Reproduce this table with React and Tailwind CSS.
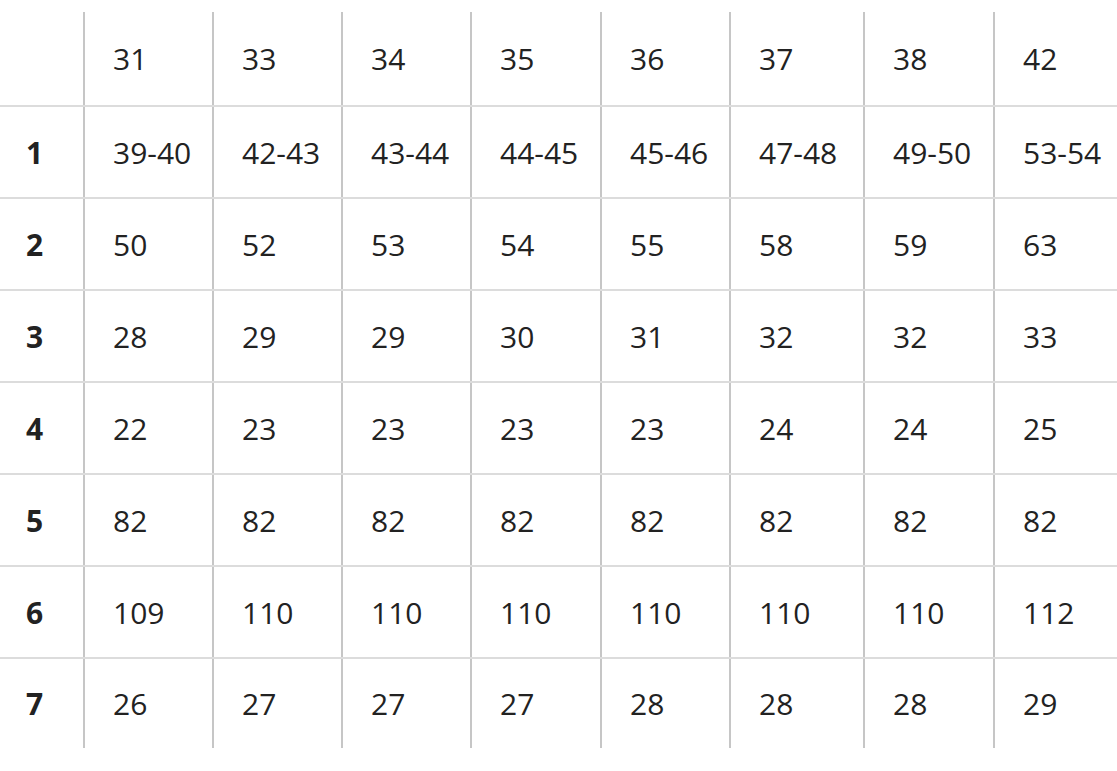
import React from 'react'

const widths = ['w-[83px]', 'w-[129px]', 'w-[129px]', 'w-[129px]', 'w-[130px]', 'w-[129px]', 'w-[134px]', 'w-[130px]', 'w-[124px]']

const head = ['31', '33', '34', '35', '36', '37', '38', '42']

const rows = [
    ['1', '39-40', '42-43', '43-44', '44-45', '45-46', '47-48', '49-50', '53-54'],
    ['2', '50', '52', '53', '54', '55', '58', '59', '63'],
    ['3', '28', '29', '29', '30', '31', '32', '32', '33'],
    ['4', '22', '23', '23', '23', '23', '24', '24', '25'],
    ['5', '82', '82', '82', '82', '82', '82', '82', '82'],
    ['6', '109', '110', '110', '110', '110', '110', '110', '112'],
    ['7', '26', '27', '27', '27', '28', '28', '28', '29'],
]

function Row({ cells, height, last }) {
    return (
        <div className={`flex ${height} ${last ? '' : 'border-b-2 border-[#dcdcdc]'}`}>
            {cells.map((c, i) => (
                <div
                    key={i}
                    className={`${widths[i]} shrink-0 flex items-center ${
                        i === 0 ? 'pl-[26px] font-bold' : 'pl-[28px] border-l-2 border-[#c6c6c6]'
                    }`}
                >
                    {c}
                </div>
            ))}
        </div>
    )
}

export default function App() {
    return (
        <div className="w-[1117px] h-[771px] bg-white pt-[12px] overflow-hidden text-[30px] text-[#222222] font-['Open_Sans',sans-serif]">
            <Row cells={['', ...head]} height="h-[95px]" />
            {rows.map((r, i) => (
                <Row key={i} cells={r} height={i === rows.length - 1 ? 'h-[89px]' : 'h-[92px]'} last={i === rows.length - 1} />
            ))}
        </div>
    )
}
